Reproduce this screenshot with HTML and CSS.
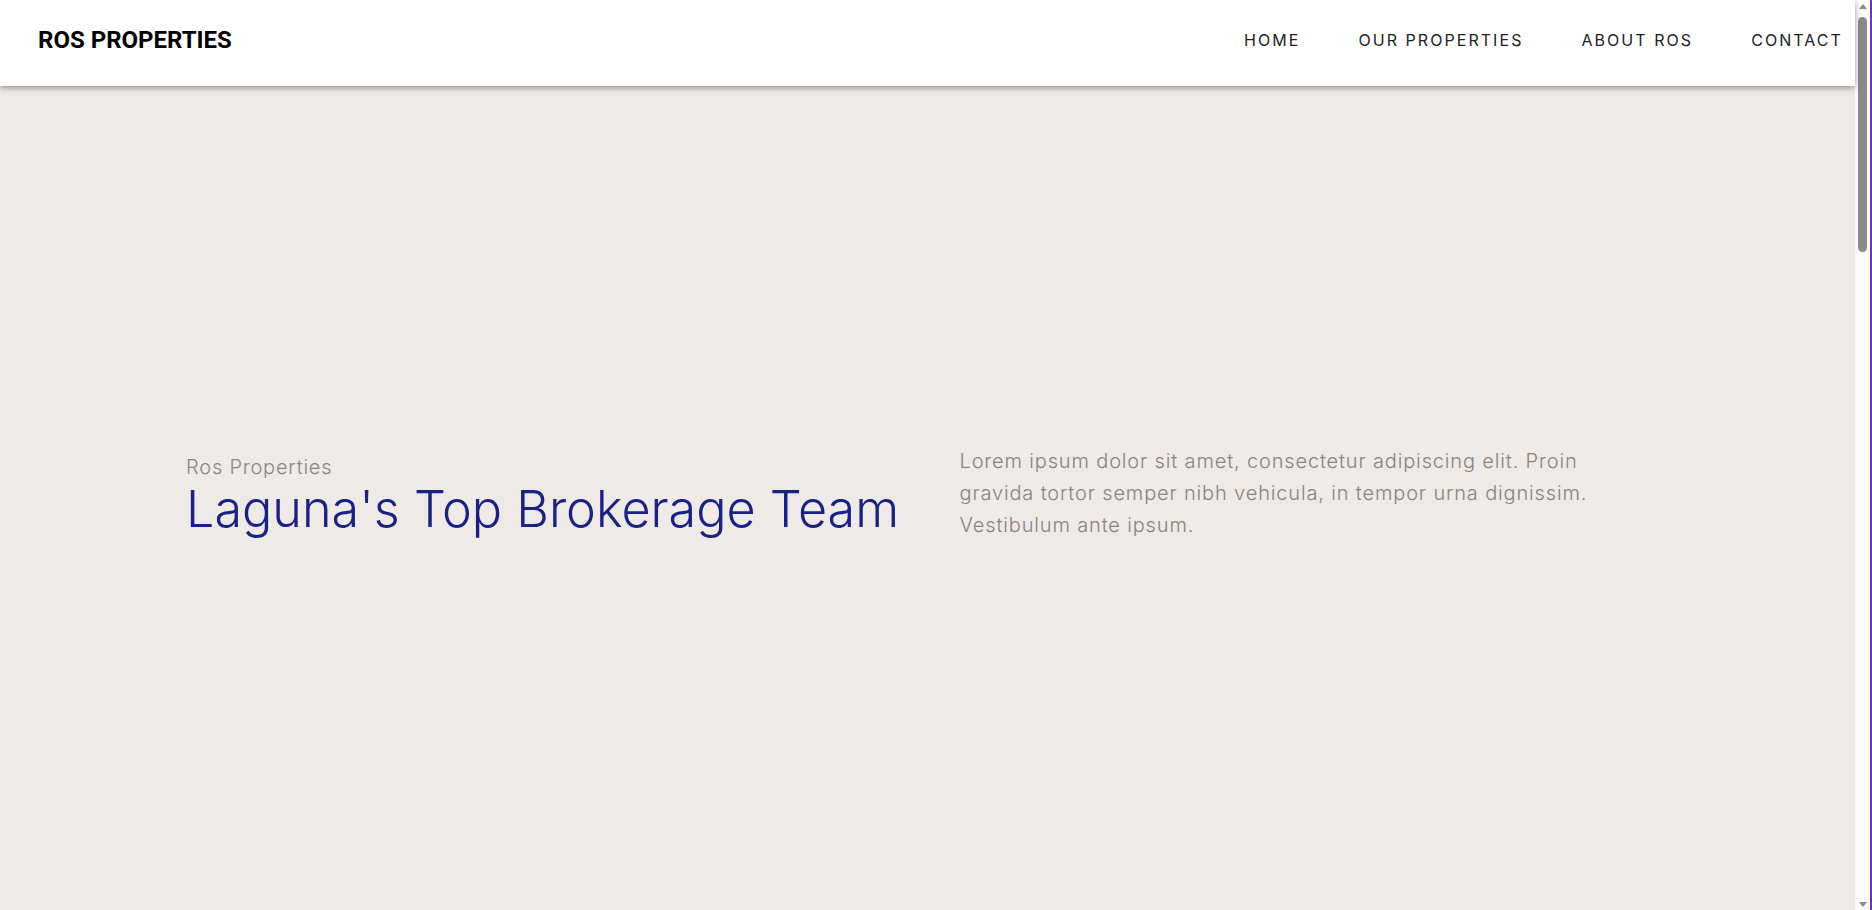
FILE: index.html
```html
<!DOCTYPE html>
<html lang="en">
<head>
<meta charset="utf-8">
<title>Ros Properties</title>
<link rel="stylesheet" href="styles.css">
</head>
<body>
<div class="page">
  <header class="topbar">
    <div class="logo">ROS PROPERTIES</div>
    <nav class="nav">
      <a href="#" class="nav-link">HOME</a>
      <a href="#" class="nav-link">OUR PROPERTIES</a>
      <a href="#" class="nav-link">ABOUT ROS</a>
      <a href="#" class="nav-link">CONTACT</a>
    </nav>
  </header>
  <main class="hero">
    <div class="hero-grid">
      <div class="hero-left">
        <div class="hero-kicker">Ros Properties</div>
        <h1 class="hero-title">Laguna's Top Brokerage Team</h1>
      </div>
      <div class="hero-right">
        <p class="hero-text">Lorem ipsum dolor sit amet, consectetur adipiscing elit. Proin gravida tortor semper nibh vehicula, in tempor urna dignissim. Vestibulum ante ipsum.</p>
      </div>
    </div>
  </main>
</div>
<div class="scrollbar">
  <div class="sb-arrow sb-up"></div>
  <div class="sb-track"><div class="sb-thumb"></div></div>
  <div class="sb-arrow sb-down"></div>
</div>
<div class="edge"></div>
</body>
</html>
```
FILE: styles.css
```css
html, body {
  margin: 0;
  padding: 0;
  height: 100%;
}
body {
  display: flex;
  height: 910px;
  overflow: hidden;
  background: #eeeae7;
  font-family: Inter, "Noto Sans", sans-serif;
}
.page {
  flex: 1;
  display: flex;
  flex-direction: column;
  min-width: 0;
}
.topbar {
  height: 86px;
  flex: 0 0 86px;
  box-sizing: border-box;
  background: #ffffff;
  display: flex;
  align-items: center;
  justify-content: space-between;
  padding: 0 12px 7px 38px;
  box-shadow: 0 2px 6px rgba(0, 0, 0, 0.38);
  position: relative;
  z-index: 2;
}
.logo {
  font-family: Roboto, "Liberation Sans", sans-serif;
  font-weight: 700;
  font-size: 24px;
  color: #000;
}
.nav {
  display: flex;
  gap: 58px;
  align-items: center;
}
.nav-link {
  font-family: Inter, "Noto Sans", sans-serif;
  font-weight: 400;
  font-size: 16px;
  letter-spacing: 2.05px;
  color: #222;
  text-decoration: none;
}
.hero {
  flex: 1;
  display: flex;
  align-items: center;
  padding: 0 186px;
}
.hero-grid {
  flex: 1;
  display: grid;
  grid-template-columns: minmax(0, 1fr) minmax(0, 1fr);
  column-gap: 64px;
  align-items: center;
  margin-top: -2px;
}
.hero-kicker {
  font-weight: 300;
  font-size: 20px;
  letter-spacing: 0.8px;
  color: #8a8686;
  line-height: 24px;
}
.hero-title {
  margin: 0;
  font-weight: 300;
  font-size: 50.3px;
  line-height: 60px;
  color: #1b2180;
  white-space: nowrap;
}
.hero-text {
  margin: -8px 0 0;
  font-weight: 300;
  font-size: 20px;
  letter-spacing: 0.85px;
  line-height: 32px;
  color: #888482;
  max-width: 665px;
}
.scrollbar {
  width: 15px;
  flex: 0 0 15px;
  background: #fcfcfc;
  display: flex;
  flex-direction: column;
  align-items: center;
}
.sb-arrow {
  width: 0;
  height: 0;
  border-left: 4px solid transparent;
  border-right: 4px solid transparent;
}
.sb-up {
  margin-top: 4px;
  border-bottom: 5px solid #8a8a8a;
}
.sb-down {
  margin-bottom: 3px;
  border-top: 5px solid #8a8a8a;
}
.sb-track {
  flex: 1;
  width: 100%;
  display: flex;
  justify-content: center;
  padding-top: 8px;
}
.sb-thumb {
  width: 9px;
  height: 235px;
  background: #8a8a8a;
  border-radius: 5px;
}
.edge {
  width: 2px;
  flex: 0 0 2px;
  background: #6a35b8;
}
```
